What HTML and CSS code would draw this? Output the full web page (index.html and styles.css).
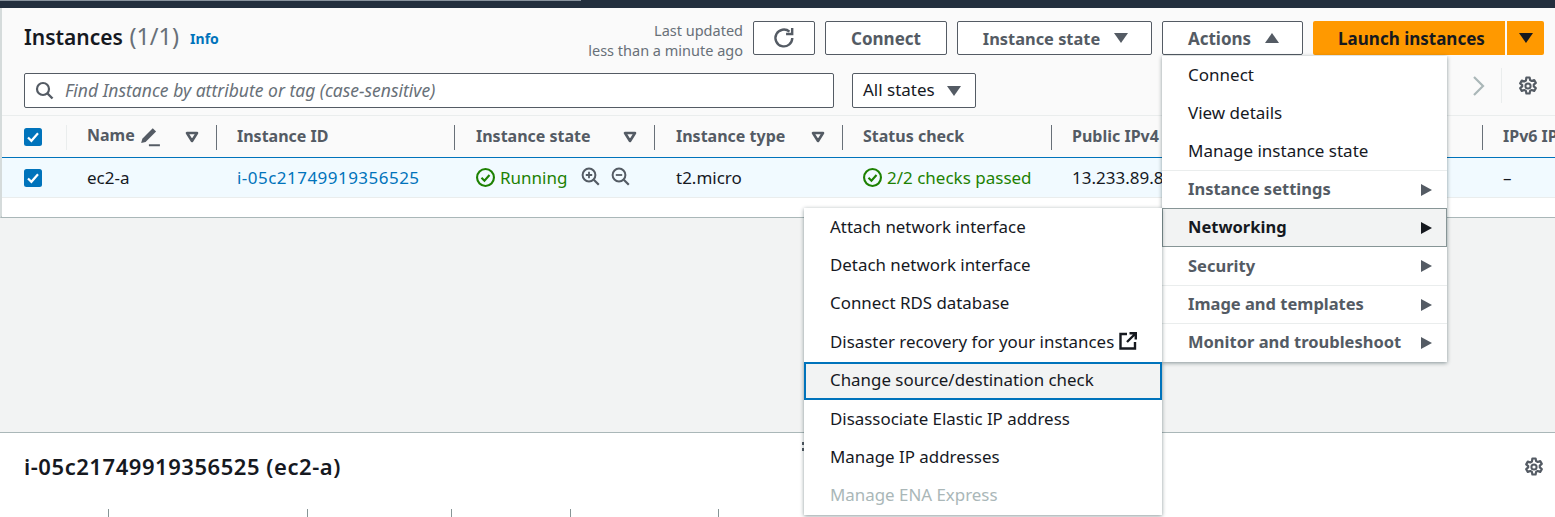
FILE: index.html
```html
<!DOCTYPE html>
<html lang="en">
<head>
<meta charset="utf-8">
<title>Instances</title>
<link rel="stylesheet" href="styles.css">
</head>
<body>
<svg class="defs" width="0" height="0" aria-hidden="true">
  <symbol id="ok" viewBox="0 0 18 18"><circle cx="9" cy="9" r="8" fill="none" stroke="currentColor" stroke-width="2"/><path d="M5.2 9.2l2.8 2.8 4.8-5.4" fill="none" stroke="currentColor" stroke-width="2"/></symbol>
  <symbol id="gear" viewBox="0 0 20 20"><path d="M8.4 1.5h3.2l.5 2.6 1.6.9 2.5-.9 1.6 2.8-2 1.7v1.8l2 1.7-1.6 2.8-2.5-.9-1.6.9-.5 2.6H8.4l-.5-2.6-1.6-.9-2.5.9-1.6-2.8 2-1.7V9.1l-2-1.7 1.6-2.8 2.5.9 1.6-.9z" fill="none" stroke="currentColor" stroke-width="2.2" stroke-linejoin="round"/><circle cx="10" cy="10" r="2.6" fill="none" stroke="currentColor" stroke-width="2"/></symbol>
  <symbol id="filter" viewBox="0 0 14 12"><path d="M2 2h10L7 10z" fill="none" stroke="currentColor" stroke-width="2.6" stroke-linejoin="round"/></symbol>
  <symbol id="check" viewBox="0 0 18 18"><rect width="18" height="18" rx="2.5" fill="#0073bb"/><path d="M4 9.5l3.4 3.3L14 5.2" fill="none" stroke="#fff" stroke-width="2.2"/></symbol>
</svg>

<div class="topbar"><div class="topbar-strip"></div></div>

<main class="page">
  <section class="instances">
    <div class="head-row">
      <h1 class="title">Instances <span class="count">(1/1)</span></h1>
      <a class="info">Info</a>
      <div class="updated">Last updated<br>less than a minute ago</div>
      <button class="btn btn-refresh" aria-label="Refresh">
        <svg width="24" height="24" viewBox="0 0 22 22"><path d="M18.6 11a7.7 7.7 0 1 1-2.6-5.8" fill="none" stroke="currentColor" stroke-width="2.2"/><path d="M18.5 1.8v5.6h-5.6" fill="none" stroke="currentColor" stroke-width="2.2"/></svg>
      </button>
      <button class="btn btn-connect">Connect</button>
      <button class="btn btn-state">Instance state<i class="tri tri-down"></i></button>
      <button class="btn btn-actions">Actions<i class="tri tri-up"></i></button>
      <div class="launch">
        <button class="btn-primary">Launch instances</button>
        <button class="btn-split" aria-label="More"><i class="tri tri-down tri-dark"></i></button>
      </div>
    </div>

    <div class="search-row">
      <div class="search">
        <svg width="19" height="19" viewBox="0 0 19 19"><circle cx="8" cy="8" r="6" fill="none" stroke="#545b64" stroke-width="2.2"/><path d="M12.5 12.5l5 5" stroke="#545b64" stroke-width="2.4"/></svg>
        <span class="search-text">Find Instance by attribute or tag (case-sensitive)</span>
      </div>
      <div class="select"><span class="select-text">All states</span><i class="tri tri-down"></i></div>
      <div class="pager">
        <svg width="14" height="22" viewBox="0 0 14 22"><path d="M2 2l9 9-9 9" fill="none" stroke="#aab7b8" stroke-width="2.2"/></svg>
        <span class="pager-gear"><svg width="20" height="20"><use href="#gear"/></svg></span>
      </div>
    </div>

    <div class="table">
      <div class="tr th">
        <div class="c c-check"><svg width="18" height="18"><use href="#check"/></svg></div>
        <div class="c c-name"><span class="name-label">Name</span>
          <svg class="pen" width="22" height="22" viewBox="0 0 20 20"><path d="M2 15.5l1-4L12.5 2l3 3L6 14.5z" fill="#545b64"/><path d="M9 17.5h10" stroke="#545b64" stroke-width="1.8"/></svg>
          <svg class="flt" width="14" height="12"><use href="#filter"/></svg></div>
        <div class="c c-id"><span class="th-text">Instance ID</span></div>
        <div class="c c-state"><span class="th-text">Instance state</span><svg class="flt" width="14" height="12"><use href="#filter"/></svg></div>
        <div class="c c-type"><span class="th-text">Instance type</span><svg class="flt" width="14" height="12"><use href="#filter"/></svg></div>
        <div class="c c-status"><span class="th-text">Status check</span></div>
        <div class="c c-ip"><span class="th-text">Public IPv4 DNS</span></div>
        <div class="c c-v6"><span class="th-text">IPv6 IPs</span></div>
      </div>
      <div class="tr td">
        <div class="c c-check"><svg width="18" height="18"><use href="#check"/></svg></div>
        <div class="c c-name">ec2-a</div>
        <div class="c c-id"><a class="link">i-05c21749919356525</a></div>
        <div class="c c-state"><span class="ok"><svg width="19" height="19"><use href="#ok"/></svg>Running</span>
          <svg class="zoom-in" width="19" height="19" viewBox="0 0 19 19"><circle cx="8" cy="8" r="6.4" fill="none" stroke="#545b64" stroke-width="2"/><path d="M12.8 12.8l5 5" stroke="#545b64" stroke-width="2.2"/><path d="M4.8 8h6.4M8 4.8v6.4" stroke="#545b64" stroke-width="1.8"/></svg>
          <svg class="zoom-out" width="19" height="19" viewBox="0 0 19 19"><circle cx="8" cy="8" r="6.4" fill="none" stroke="#545b64" stroke-width="2"/><path d="M12.8 12.8l5 5" stroke="#545b64" stroke-width="2.2"/><path d="M4.8 8h6.4" stroke="#545b64" stroke-width="1.8"/></svg>
        </div>
        <div class="c c-type">t2.micro</div>
        <div class="c c-status"><span class="ok"><svg width="19" height="19"><use href="#ok"/></svg>2/2 checks passed</span></div>
        <div class="c c-ip">13.233.89.8</div>
        <div class="c c-v6">–</div>
      </div>
      <div class="table-end"></div>
    </div>
  </section>

  <div class="gap"></div>

  <section class="details">
    <div class="details-head">
      <h2 class="details-title">i-05c21749919356525 (ec2-a)</h2>
      <svg class="details-gear" width="20" height="20"><use href="#gear"/></svg>
    </div>
    <div class="tabs"><i></i><i></i><i></i><i></i><i></i></div>
    <div class="grip"></div>
  </section>

  <ul class="menu menu-actions">
    <li class="mi">Connect</li>
    <li class="mi">View details</li>
    <li class="mi">Manage instance state</li>
    <li class="mi mi-group sep">Instance settings<i class="tri tri-right"></i></li>
    <li class="mi mi-group mi-open">Networking<i class="tri tri-right tri-dark"></i></li>
    <li class="mi mi-group">Security<i class="tri tri-right"></i></li>
    <li class="mi mi-group sep">Image and templates<i class="tri tri-right"></i></li>
    <li class="mi mi-group sep">Monitor and troubleshoot<i class="tri tri-right"></i></li>
  </ul>

  <ul class="menu menu-network">
    <li class="mi">Attach network interface</li>
    <li class="mi">Detach network interface</li>
    <li class="mi">Connect RDS database</li>
    <li class="mi">Disaster recovery for your instances
      <svg class="ext" width="18" height="18" viewBox="0 0 18 18"><path d="M8 2H1.5v14.5H16V10" fill="none" stroke="#16191f" stroke-width="2.4"/><path d="M10.5 1.2h6.3v6.3M16.5 1.5L8 10" fill="none" stroke="#16191f" stroke-width="2.4"/></svg></li>
    <li class="mi mi-focus">Change source/destination check</li>
    <li class="mi">Disassociate Elastic IP address</li>
    <li class="mi">Manage IP addresses</li>
    <li class="mi mi-disabled">Manage ENA Express</li>
  </ul>
</main>
</body>
</html>
```
FILE: styles.css
```css
* { box-sizing: border-box; }
html, body { margin: 0; padding: 0; }
body {
  width: 1555px;
  height: 517px;
  overflow: hidden;
  background: #f2f3f3;
  font-family: "Noto Sans", "Open Sans", sans-serif;
  font-size: 17px;
  color: #16191f;
}
.defs { position: absolute; }
button { font: inherit; cursor: pointer; }

.topbar { height: 8px; background: #232f3e; }
.topbar-strip { width: 581px; height: 1px; background: #8a949e; }

.page { position: relative; height: 509px; display: flex; flex-direction: column; }

.instances {
  height: 210px;
  background: #fff;
  border-left: 2px solid #d5dbdb;
  border-bottom: 2px solid #aab7b8;
}
.head-row {
  height: 65px;
  display: flex;
  align-items: flex-start;
  padding: 13px 11px 0 22px;
  background: #fafafa;
}
.title { margin: -1px 0 0; font-size: 21px; line-height: 32px; font-weight: 600; white-space: nowrap; }
.count { font-weight: 400; font-size: 23.5px; color: #687078; margin-left: 1px; }
.info { margin: 8px 0 0 11px; font-size: 14px; line-height: 20px; font-weight: 700; color: #0073bb; }
.updated {
  margin-left: auto;
  margin-top: -1px;
  width: 170px;
  text-align: right;
  font-size: 14.5px;
  line-height: 20px;
  color: #687078;
}
.btn {
  height: 34px;
  display: flex;
  align-items: center;
  justify-content: center;
  background: #fff;
  color: #545b64;
  border: 1px solid #545b64;
  border-radius: 2px;
  font-weight: 700;
  font-size: 17px;
  padding: 0;
}
.btn-refresh { width: 62px; margin-left: 10px; }
.btn-connect { width: 122px; margin-left: 10px; }
.btn-state { width: 195px; margin-left: 10px; gap: 14px; font-size: 16.4px; padding-left: 2px; }
.btn-actions { width: 141px; margin-left: 10px; gap: 14px; padding-left: 2px; }
.launch { display: flex; margin-left: 10px; gap: 2px; }
.btn-primary, .btn-split {
  height: 34px;
  border: 0;
  background: #ff9900;
  color: #16191f;
  font-weight: 700;
  padding: 0;
}
.btn-primary { width: 192px; padding-left: 5px; border-radius: 2px 0 0 2px; }
.btn-split { width: 37px; border-radius: 0 2px 2px 0; display: flex; align-items: center; justify-content: center; }

.tri { display: inline-block; width: 0; height: 0; }
.tri-down { border-left: 7px solid transparent; border-right: 7px solid transparent; border-top: 10px solid #545b64; }
.tri-up { border-left: 7px solid transparent; border-right: 7px solid transparent; border-bottom: 10px solid #545b64; }
.tri-right { border-top: 6px solid transparent; border-bottom: 6px solid transparent; border-left: 11px solid #545b64; margin-top: 2px; }
.tri-down.tri-dark { border-top-color: #16191f; }
.tri-right.tri-dark { border-left-color: #16191f; }

.search-row {
  height: 42px;
  display: flex;
  align-items: flex-start;
  padding-left: 22px;
  background: #fafafa;
}
.search {
  width: 810px;
  height: 35px;
  display: flex;
  align-items: center;
  gap: 11px;
  padding-left: 10px;
  background: #fff;
  border: 1px solid #545b64;
  border-radius: 2px;
  color: #687078;
  font-style: italic;
}
.search-text { font-size: 17.5px; padding-bottom: 2px; }
.select {
  width: 124px;
  height: 35px;
  margin-left: 18px;
  display: flex;
  align-items: center;
  gap: 12px;
  padding-left: 10px;
  background: #fff;
  border: 1px solid #545b64;
  border-radius: 2px;
}
.select-text { padding-bottom: 2px; }
.pager { margin-left: auto; margin-top: -5px; width: 83px; height: 35px; display: flex; align-items: center; color: #545b64; }
.pager-gear { margin-left: 15px; height: 35px; padding-left: 16px; display: flex; align-items: center; border-left: 1px solid #eaeded; }

.table { display: flex; flex-direction: column; }
.tr { display: flex; align-items: center; }
.c { display: flex; align-items: center; flex: none; white-space: nowrap; position: relative; height: 100%; }
.c-check { width: 65px; padding-left: 22px; }
.c-name { width: 150px; padding-left: 20px; }
.c-id { width: 238px; padding-left: 20px; }
.c-state { width: 200px; padding-left: 21px; }
.c-type { width: 188px; padding-left: 21px; }
.c-status { width: 209px; padding-left: 20px; }
.c-ip { width: 431px; padding-left: 20px; }
.c-v6 { width: 70px; padding-left: 20px; }

.th {
  height: 43px;
  background: #fafafa;
  border-top: 1px solid #eaeded;
  border-bottom: 1px solid #0073bb;
  font-size: 16px;
  font-weight: 700;
  color: #545b64;
}
.th .c::after {
  content: "";
  position: absolute;
  right: 0;
  top: 9px;
  height: 25px;
  width: 1px;
  background: #687078;
}
.th .c-check::after { background: #eaeded; }
.th .c-v6::after { display: none; }
.th-text { padding-bottom: 2px; }
.name-label { padding-bottom: 3px; }
.pen { margin-left: 4px; }
.flt { position: absolute; color: #545b64; top: 15px; }
.c-name .flt { left: 118px; }
.c-state .flt { left: 168px; }
.c-type .flt { left: 156px; }

.td {
  height: 40px;
  background: #f1faff;
  border-bottom: 1px solid #eaeded;
}
.link { color: #0073bb; letter-spacing: 0.47px; }
.ok { display: inline-flex; align-items: center; gap: 5px; color: #1d8102; }
.zoom-in { margin-left: 14px; margin-top: -2px; }
.zoom-out { margin-left: 11px; margin-top: -2px; }
.table-end { height: 19px; background: #fff; }

.gap { height: 214px; background: #f2f3f3; flex: none; }

.details {
  flex: 1;
  position: relative;
  background: #fff;
  border-top: 1px solid #aab7b8;
  min-height: 0;
}
.details-head { height: 76px; display: flex; align-items: flex-start; justify-content: space-between; padding: 17px 11px 0 24px; }
.details-title { margin: 0; font-size: 22px; line-height: 32px; font-weight: 600; letter-spacing: 0.55px; }
.details-gear { color: #545b64; margin-top: 7px; }
.tabs { height: 8px; display: flex; padding-left: 108px; }
.tabs i { display: block; width: 1px; height: 8px; background: #879596; }
.tabs i:nth-child(1) { margin-right: 198px; }
.tabs i:nth-child(2) { margin-right: 143px; }
.tabs i:nth-child(3) { margin-right: 118px; }
.tabs i:nth-child(4) { margin-right: 147px; }
.grip { position: absolute; left: 802px; top: 9px; width: 3px; height: 9px; border-top: 3px solid #545b64; border-bottom: 3px solid #545b64; }

.menu {
  position: absolute;
  margin: 0;
  padding: 0;
  list-style: none;
  background: #fff;
  box-shadow: 0 1px 4px rgba(0, 28, 36, 0.45);
}
.menu-actions { left: 1162px; top: 48px; width: 285px; padding-bottom: 1px; }
.menu-network { left: 804px; top: 200px; width: 358px; font-size: 16.9px; }
.mi {
  height: 38px;
  display: flex;
  align-items: center;
  padding: 0 15px 2px 26px;
  white-space: nowrap;
  color: #16191f;
}
.menu-network .mi { height: 38.4px; }
.mi-group { justify-content: space-between; font-size: 16.5px; font-weight: 700; color: #545b64; }
.sep { border-top: 1px solid #eaeded; }
.mi-open { background: #f2f3f3; color: #16191f; border: 1px solid #879596; padding-left: 25px; padding-right: 14px; height: 39px; }
.mi-focus { background: #f2f3f3; outline: 2px solid #0073bb; outline-offset: -2px; }
.mi-disabled { color: #aab7b8; }
.ext { margin-left: 5px; }
```
